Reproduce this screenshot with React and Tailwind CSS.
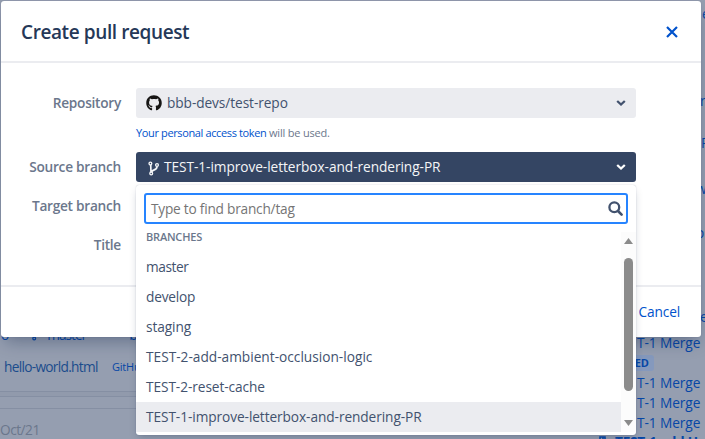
import { FaGithub } from "react-icons/fa";

const branches = [
  { name: "master", tracking: "tracking-[-0.42px]" },
  { name: "develop", tracking: "tracking-[-0.2px]" },
  { name: "staging", tracking: "tracking-[-0.1px]" },
  { name: "TEST-2-add-ambient-occlusion-logic", tracking: "tracking-normal" },
  { name: "TEST-2-reset-cache", tracking: "tracking-[-0.08px]" },
  { name: "TEST-1-improve-letterbox-and-rendering-PR", tracking: "tracking-[-0.08px]", selected: true },
];

function Chevron({ className }) {
  return (
    <svg width="10" height="8" viewBox="0 0 10 8" className={className} fill="none" stroke="currentColor" strokeWidth="2.3">
      <path d="M1.2 2 L5 5.5 L8.8 2" />
    </svg>
  );
}

function BranchIcon({ className }) {
  return (
    <svg width="12" height="15" viewBox="0 0 12 15" className={className} fill="none" stroke="currentColor" strokeWidth="1.3">
      <circle cx="2.4" cy="2.6" r="1.4" />
      <circle cx="9" cy="4" r="1.4" />
      <circle cx="3.2" cy="12.4" r="1.4" />
      <path d="M2.7 4 L3 11 M9 5.4 C9 9.6 5 8 3.4 11" strokeWidth="1.7" />
    </svg>
  );
}

function SearchIcon() {
  return (
    <svg width="15" height="15" viewBox="0 0 15 15" className="text-[#42526e]" fill="none" stroke="currentColor">
      <circle cx="6.3" cy="6.3" r="4.9" strokeWidth="2.3" />
      <path d="M10 10 L13.6 13.6" strokeWidth="2.6" strokeLinecap="round" />
    </svg>
  );
}

function Label({ children }) {
  return <div className="w-[120px] shrink-0 pt-px text-right font-semibold tracking-[-0.27px] text-[#6b778c]">{children}</div>;
}

export default function App() {
  return (
    <div className="relative h-[439px] w-[705px] overflow-hidden bg-[#959eb0] font-['Open_Sans','Noto_Sans',sans-serif] text-[13.7px] text-[#42526e]">
      <div className="flex h-full justify-between text-[#0747a6]">
        <div className="flex h-full w-[160px] flex-col pt-[325px]">
          <div className="flex h-5 shrink-0 items-center whitespace-nowrap">
            <span className="ml-px">o</span>
            <BranchIcon className="ml-[22px] -mt-1" />
            <span className="ml-[4px] w-[38px] tracking-[-1px]">master</span>
            <span className="ml-[44px]">b</span>
          </div>
          <div className="mt-[12px] flex h-5 shrink-0 items-center pl-[4px] text-[#1b4c8c]">
            <span className="w-[108px] tracking-[-0.7px]">hello-world.html</span>
            <span className="text-[11px] tracking-[-0.2px] text-[#0747a6]">GitHub</span>
          </div>
          <div className="mt-[14px] h-[6px] shrink-0 border-y border-[#858fa3] bg-[#919aac]" />
          <div className="mt-[11px] h-px shrink-0 bg-[#858fa3]" />
          <div className="mt-[11px] h-5 shrink-0 leading-5 tracking-[-0.5px] text-[#6b778c]">Oct/21</div>
        </div>
        <div className="flex w-[107px] flex-col whitespace-nowrap leading-5">
          <div className="flex h-[333px] w-[5px] shrink-0 flex-col self-end pt-[4px]">
            <span className="h-[87px] shrink-0 pl-0.5">e</span>
            <span className="h-[42px] shrink-0">r</span>
            <span className="h-[46px] shrink-0 pl-px">P</span>
            <span className="-ml-1 h-[44px] shrink-0">w</span>
            <span className="-ml-1 h-[84px] shrink-0">o</span>
            <span className="shrink-0">e</span>
          </div>
          <span className="pl-[39px] tracking-[-0.08px]">T-1 Merge</span>
          <div className="flex h-5 shrink-0 items-center pl-[26px]">
            <span className="flex h-4 w-[30px] items-center justify-end rounded-[3px] bg-[#8599bd] pr-[5px] text-[11px] font-bold">ED</span>
          </div>
          <span className="pl-[39px] tracking-[-0.08px]">T-1 Merge</span>
          <span className="pl-[39px] tracking-[-0.08px]">T-1 Merge</span>
          <span className="pl-[39px] tracking-[-0.08px]">T-1 Merge</span>
          <div className="flex h-4 shrink-0 items-start pl-[1px] pt-[1px] leading-4">
            <svg width="12" height="12" viewBox="0 0 12 12" className="mt-0.5" fill="none" stroke="currentColor" strokeWidth="1.6"><path d="M1 1 H6 V4 H11 V11 H1 Z M4 1 V8" /></svg>
            <span className="ml-1 font-bold tracking-[-0.3px]">TEST-1 add Us</span>
          </div>
        </div>
      </div>

      <section className="absolute left-px top-px flex h-[336px] w-[700px] flex-col rounded-[3px] bg-white shadow-[0_0_1px_rgba(9,30,66,0.3),0_8px_16px_-4px_rgba(9,30,66,0.35)]">
        <header className="flex h-[62px] shrink-0 items-center justify-between border-b-2 border-[#ebecf0] pl-5 pr-[23px] pt-0.5">
          <h1 className="text-[19px] font-semibold tracking-[-0.4px] text-[#253858]">Create pull request</h1>
          <svg width="12" height="12" viewBox="0 0 12 12" className="text-[#0052cc]" stroke="currentColor" strokeWidth="2.2"><path d="M1 1 L11 11 M11 1 L1 11" /></svg>
        </header>
        <div className="flex h-[222px] shrink-0 flex-col pt-[25px]">
          <div className="flex h-[30px] items-center">
            <Label>Repository</Label>
            <div className="ml-[15px] flex h-[30px] w-[500px] items-center rounded-[3px] bg-[#ebecf0] pl-2.5 pr-[10px]">
              <FaGithub className="h-4 w-4 text-[#161514]" />
              <span className="ml-[5px] tracking-[-0.08px]">bbb-devs/test-repo</span>
              <Chevron className="ml-auto" />
            </div>
          </div>
          <div className="ml-[135px] h-[34px] pt-[6px] text-[11px] leading-[18px] text-[#6b778c]">
            <span className="inline-block w-[133px] tracking-[-0.37px] text-[#0052cc]">Your personal access token</span>
            <span className="tracking-[-0.2px]">will be used.</span>
          </div>
          <div className="flex h-[30px] items-center">
            <Label>Source branch</Label>
            <div className="ml-[15px] flex h-[30px] w-[500px] items-center rounded-[3px] bg-[#344563] pl-3 pr-[10px] text-[#f4f5f7]">
              <BranchIcon className="mt-0.5" />
              <span className="ml-1 tracking-[-0.06px]">TEST-1-improve-letterbox-and-rendering-PR</span>
              <Chevron className="ml-auto text-white" />
            </div>
          </div>
          <div className="mt-[9px] flex h-[30px] items-center"><Label>Target branch</Label></div>
          <div className="mt-[9px] flex h-[30px] items-center"><Label>Title</Label></div>
        </div>
        <footer className="flex flex-1 items-center justify-end border-t-2 border-[#ebecf0] pr-[21px] pt-px tracking-[-0.15px] text-[#0052cc]">Cancel</footer>
      </section>

      <div className="absolute left-[136px] top-[185px] flex h-[250px] w-[500px] flex-col overflow-hidden rounded-[3px] bg-white shadow-[0_0_1px_rgba(9,30,66,0.31),0_4px_8px_-2px_rgba(9,30,66,0.25)]">
        <div className="mx-2 mt-2 flex h-[31px] w-[484px] shrink-0 items-center justify-between rounded-[3px] border-2 border-[#2684ff] pl-[5px] pr-[3px] text-[#757575]">
          <span className="pt-0.5 tracking-[-0.23px]">Type to find branch/tag</span>
          <SearchIcon />
        </div>
        <div className="mt-[8px] flex h-[200px] shrink-0">
          <ul className="w-[485px]">
            <li className="h-5 pl-[10px] text-[11px] font-semibold leading-[10px] tracking-[-0.2px] text-[#6b778c]">BRANCHES</li>
            {branches.map((b) => (
              <li key={b.name} className={`h-[30px] pl-[10px] leading-[30px] ${b.tracking} ${b.selected ? "bg-[#ebecf0]" : ""}`}>{b.name}</li>
            ))}
          </ul>
          <div className="flex w-[15px] flex-col items-center justify-between bg-[#fcfcfc] pb-[6px] pt-[6px]">
            <svg width="9" height="6" viewBox="0 0 9 6" className="shrink-0" fill="#8b8b8b"><path d="M4.5 0 L9 6 H0 Z" /></svg>
            <div className="mb-[22px] mt-[14px] w-[9px] flex-1 rounded-full bg-[#8b8b8b]" />
            <svg width="9" height="6" viewBox="0 0 9 6" className="mt-[7px] shrink-0" fill="#8b8b8b"><path d="M4.5 6 L9 0 H0 Z" /></svg>
          </div>
        </div>
      </div>
    </div>
  );
}
